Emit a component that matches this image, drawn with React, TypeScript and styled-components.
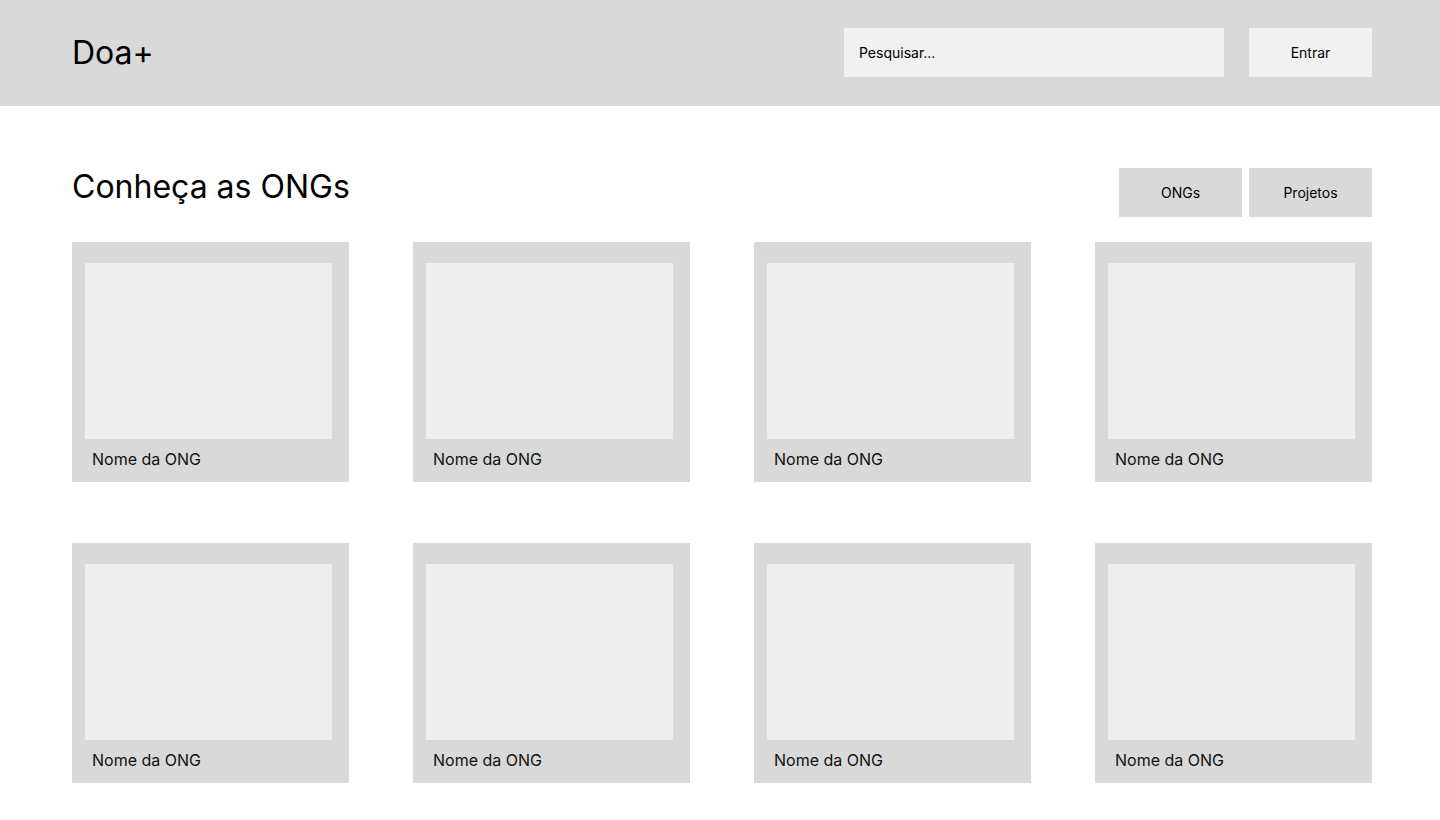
import React from "react";
import styled, { createGlobalStyle } from "styled-components";

const ONGS = Array.from({ length: 8 }, (_, i) => ({
  id: i,
  name: "Nome da ONG",
}));

const GlobalStyle = createGlobalStyle`
  * {
    box-sizing: border-box;
  }

  body {
    margin: 0;
    background: #ffffff;
    font-family: Inter, "Noto Sans", sans-serif;
    color: #000000;
  }
`;

const Header = styled.header`
  display: flex;
  align-items: center;
  height: 106px;
  padding: 0 68px 1px 72px;
  background: #d9d9d9;
`;

const Logo = styled.h1`
  flex: 1;
  margin: 0;
  font-size: 32px;
  font-weight: 400;
  line-height: 1;
`;

const SearchInput = styled.input`
  width: 380px;
  height: 49px;
  padding: 0 15px;
  border: none;
  outline: none;
  background: #f1f1f1;
  font-family: inherit;
  font-size: 14px;
  color: #000000;

  &::placeholder {
    color: #000000;
  }
`;

const Button = styled.button<{ $light?: boolean }>`
  width: 123px;
  height: 49px;
  border: none;
  background: ${({ $light }) => ($light ? "#f1f1f1" : "#d9d9d9")};
  font-family: inherit;
  font-size: 14px;
  color: #000000;
  cursor: pointer;
`;

const LoginButton = styled(Button)`
  margin-left: 25px;
`;

const Main = styled.main`
  padding: 62px 68px 0 72px;
`;

const SectionHead = styled.div`
  display: flex;
  justify-content: space-between;
  align-items: flex-start;
  margin-bottom: 25px;
`;

const Title = styled.h2`
  margin: 0;
  padding-top: 3px;
  font-size: 32px;
  font-weight: 400;
  line-height: 32px;
`;

const Tabs = styled.div`
  display: flex;
  gap: 7px;
`;

const Grid = styled.div`
  display: grid;
  grid-template-columns: repeat(4, 277px);
  column-gap: 64px;
  row-gap: 61px;
`;

const Card = styled.div`
  display: flex;
  flex-direction: column;
  height: 240px;
  padding: 21px 0 0 13px;
  background: #d9d9d9;
`;

const CardImage = styled.div`
  width: 247px;
  height: 176px;
  background: #eeeeee;
`;

const CardName = styled.span`
  margin-top: 10px;
  padding-left: 7px;
  font-size: 16px;
  line-height: 20px;
  color: #111111;
`;

export default function App() {
  return (
    <>
      <GlobalStyle />
      <Header>
        <Logo>Doa+</Logo>
        <SearchInput type="text" placeholder="Pesquisar..." />
        <LoginButton $light>Entrar</LoginButton>
      </Header>

      <Main>
        <SectionHead>
          <Title>Conheça as ONGs</Title>
          <Tabs>
            <Button>ONGs</Button>
            <Button>Projetos</Button>
          </Tabs>
        </SectionHead>

        <Grid>
          {ONGS.map((ong) => (
            <Card key={ong.id}>
              <CardImage />
              <CardName>{ong.name}</CardName>
            </Card>
          ))}
        </Grid>
      </Main>
    </>
  );
}
